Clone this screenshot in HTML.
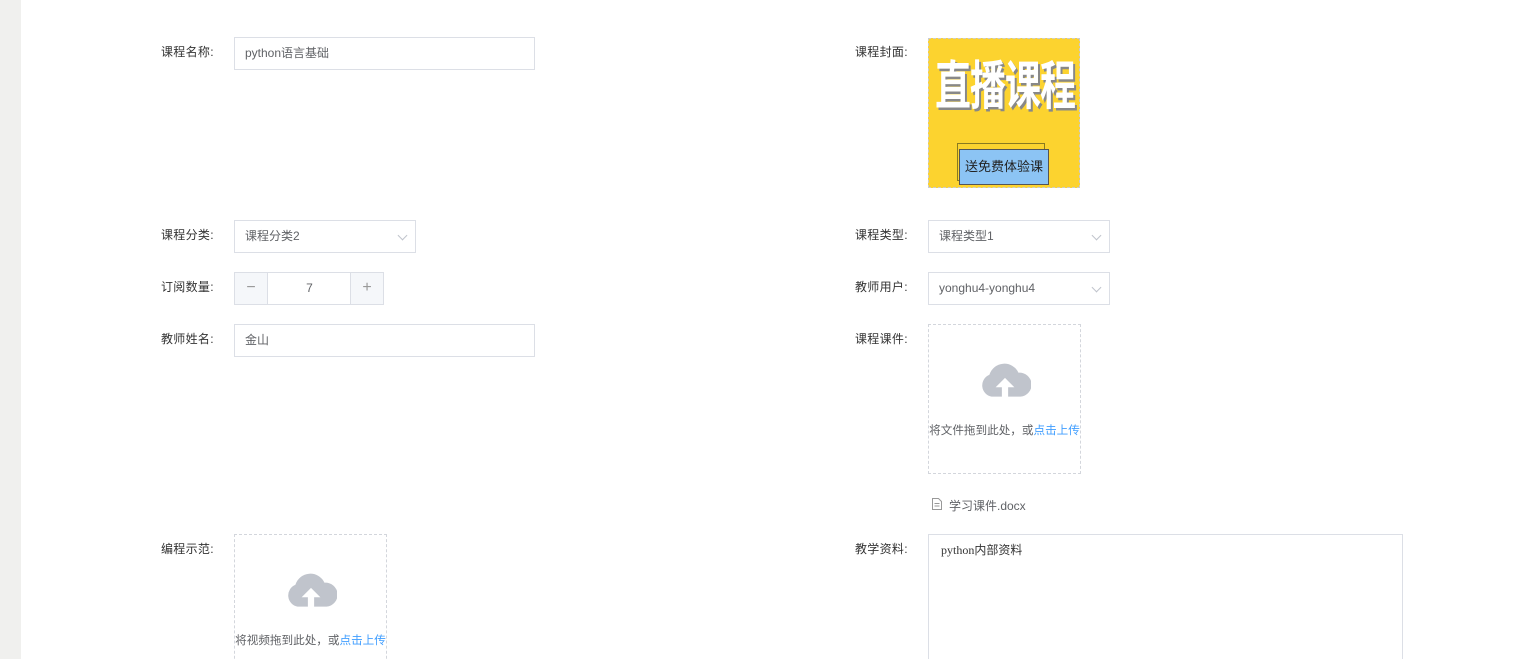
<!DOCTYPE html>
<html><head><meta charset="utf-8"><style>
*{margin:0;padding:0;box-sizing:border-box}
html,body{width:1515px;height:659px;overflow:hidden}
body{background:#fff;position:relative;font-family:"Liberation Sans","Noto Sans CJK SC",sans-serif;font-size:12px;color:#606266}
.strip{position:absolute;left:0;top:0;width:21px;height:659px;background:#f0f0ee}
.a{position:absolute}
.lbl{position:absolute;color:#333;font-size:12px;line-height:14px;letter-spacing:0.3px}
.inp{position:absolute;border:1px solid #dcdfe6;background:#fff;height:33px;line-height:31px;padding-left:10px;color:#606266;font-size:12px}
.arr{position:absolute;right:9px;top:11px;width:7px;height:7px;border-right:1px solid #c0c4cc;border-bottom:1px solid #c0c4cc;transform:rotate(45deg)}
.up{position:absolute;border:1px dashed #d3d6dc;background:#fff;text-align:center}
.up .t{position:absolute;left:0;right:0;font-size:11.6px;color:#606266;white-space:nowrap}
.up .t em{font-style:normal;color:#409eff}
</style></head><body>
<div class="strip"></div>

<div class="lbl" style="left:161px;top:45px">课程名称:</div>
<div class="inp" style="left:234px;top:37px;width:301px">python语言基础</div>

<div class="lbl" style="left:855px;top:45px">课程封面:</div>
<div class="a" style="left:928px;top:38px;width:152px;height:150px;border:1px dashed #ccc;background:#fcd32f;overflow:hidden">
 <div class="a" style="left:2px;top:18px;width:148px;text-align:center;font-size:36px;font-weight:bold;color:#fff;letter-spacing:-1px;text-shadow:2px 2px 0 #888;line-height:50px;transform:scaleY(1.45);font-family:'Noto Sans CJK SC',sans-serif">直播课程</div>
 <div class="a" style="left:28px;top:104px;width:88px;height:38px;border:1px solid #8a7a20"></div>
 <div class="a" style="left:30px;top:110px;width:90px;height:36px;background:#8cc4f4;border:1px solid #555;text-align:center;line-height:34px;font-size:13px;color:#222;white-space:nowrap">送免费体验课</div>
</div>

<div class="lbl" style="left:161px;top:228px">课程分类:</div>
<div class="inp" style="left:234px;top:220px;width:182px">课程分类2<span class="arr"></span></div>
<div class="lbl" style="left:855px;top:228px">课程类型:</div>
<div class="inp" style="left:928px;top:220px;width:182px">课程类型1<span class="arr"></span></div>

<div class="lbl" style="left:161px;top:280px">订阅数量:</div>
<div class="a" style="left:234px;top:272px;width:150px;height:33px;border:1px solid #dcdfe6">
 <div class="a" style="left:0;top:0;width:33px;height:31px;background:#f5f7fa;border-right:1px solid #dcdfe6;text-align:center;line-height:30px;color:#999;font-size:16px">−</div>
 <div class="a" style="left:33px;top:0;width:83px;height:31px;text-align:center;line-height:31px">7</div>
 <div class="a" style="right:0;top:0;width:33px;height:31px;background:#f5f7fa;border-left:1px solid #dcdfe6;text-align:center;line-height:30px;color:#999;font-size:16px">+</div>
</div>
<div class="lbl" style="left:855px;top:280px">教师用户:</div>
<div class="inp" style="left:928px;top:272px;width:182px">yonghu4-yonghu4<span class="arr"></span></div>

<div class="lbl" style="left:161px;top:332px">教师姓名:</div>
<div class="inp" style="left:234px;top:324px;width:301px">金山</div>

<div class="lbl" style="left:855px;top:332px">课程课件:</div>
<div class="up" style="left:928px;top:324px;width:153px;height:150px">
 <svg class="a" style="left:50px;top:34px" width="52" height="42" viewBox="0 0 50 40"><path d="M12 36 A11 11 0 0 1 10 15 A15 15 0 0 1 38 13 A11.5 11.5 0 0 1 40 36 Z" fill="#c0c4cc"/><path d="M25 18 L16 27 L22 27 L22 38 L28 38 L28 27 L34 27 Z" fill="#fff"/></svg>
 <div class="t" style="top:97px">将文件拖到此处，或<em>点击上传</em></div>
</div>
<svg class="a" style="left:932px;top:498px" width="10" height="12" viewBox="0 0 10 12"><path d="M0.5 0.5H6.5L9.5 3.5V11.5H0.5Z" fill="none" stroke="#999"/><path d="M2.5 5.5H7.5M2.5 8H7.5" stroke="#999"/></svg>
<div class="a" style="left:949px;top:497px;color:#606266">学习课件.docx</div>

<div class="lbl" style="left:161px;top:542px">编程示范:</div>
<div class="up" style="left:234px;top:534px;width:153px;height:140px">
 <svg class="a" style="left:50px;top:34px" width="52" height="42" viewBox="0 0 50 40"><path d="M12 36 A11 11 0 0 1 10 15 A15 15 0 0 1 38 13 A11.5 11.5 0 0 1 40 36 Z" fill="#c0c4cc"/><path d="M25 18 L16 27 L22 27 L22 38 L28 38 L28 27 L34 27 Z" fill="#fff"/></svg>
 <div class="t" style="top:97px">将视频拖到此处，或<em>点击上传</em></div>
</div>

<div class="lbl" style="left:855px;top:542px">教学资料:</div>
<div class="a" style="left:928px;top:534px;width:475px;height:140px;border:1px solid #dcdfe6;padding:6px 12px;font-family:'Liberation Serif','Noto Sans CJK SC',serif;font-size:12px;color:#333">python内部资料</div>
</body></html>
